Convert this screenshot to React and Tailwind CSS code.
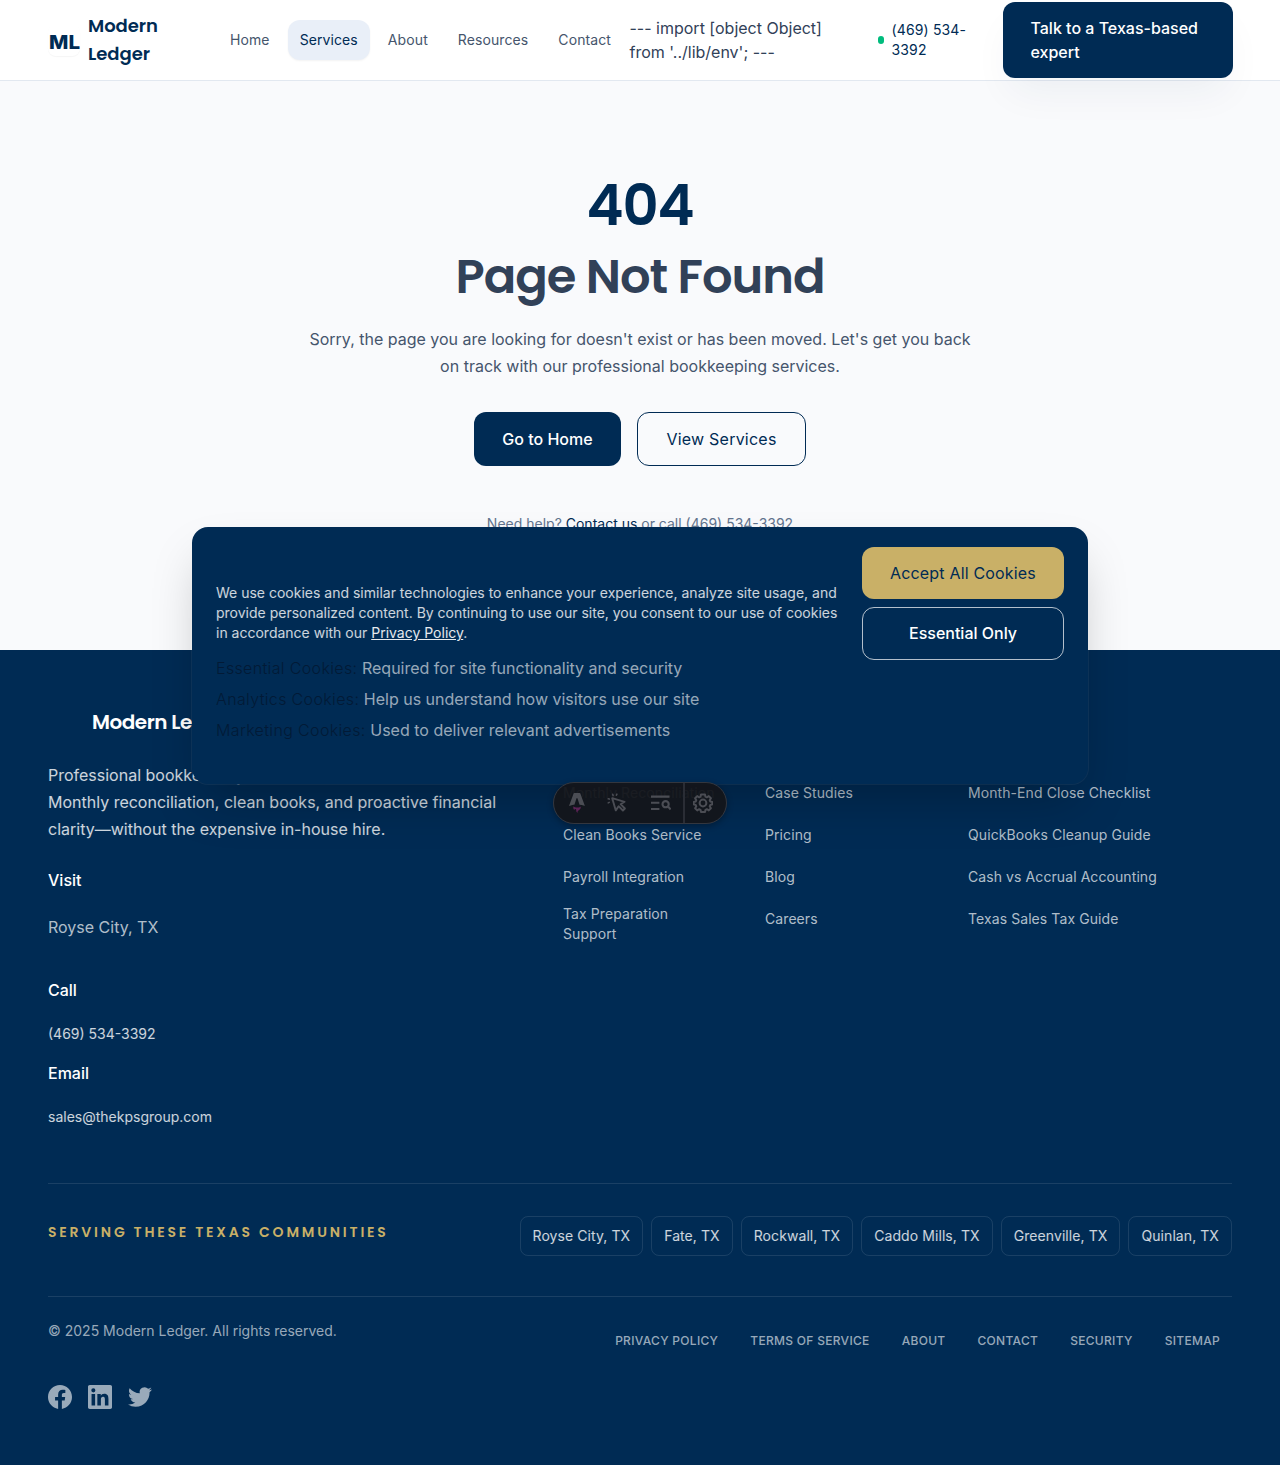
import React from "react";

const display = "font-['Poppins','Inter',sans-serif]";

function Header() {
  return (
    <header className="flex h-[81px] items-center border-b border-slate-200 bg-white px-12">
      <a className="flex w-[170px] shrink-0 items-center gap-2">
        <span className="flex size-8 items-center justify-center rounded-lg bg-white shadow-[0_1px_1px_rgba(0,0,0,0.04)]">
          <svg width="32" height="32" viewBox="0 0 32 32">
            <text x="1" y="24.5" fontSize="19" fontWeight="800" fill="#002b54" fontFamily="Inter, sans-serif" textLength="31" lengthAdjust="spacingAndGlyphs">ML</text>
          </svg>
        </span>
        <span className={`${display} w-20 text-[18px] leading-7 font-semibold tracking-[-0.002em] text-[#002b54]`}>Modern Ledger</span>
      </a>
      <nav className="flex w-[405.5px] shrink-0 items-center gap-[6px] text-sm leading-5 tracking-[0.007em] text-slate-600">
        <a className="px-3 py-[10px]">Home</a>
        <a className="rounded-xl bg-[#e9eff8] px-3 py-[10px] text-[#002b54] shadow-xs">Services</a>
        <a className="px-3 py-[10px]">About</a>
        <a className="px-3 py-[10px]">Resources</a>
        <a className="px-3 py-[10px]">Contact</a>
      </nav>
      <p className="ml-[6px] w-[248px] shrink-0 pr-8 leading-6 text-slate-700">--- import [object Object] from '../lib/env'; ---</p>
      <div className="flex w-[125px] shrink-0 items-center gap-2">
        <span className="h-2 w-[6px] shrink-0 rounded-full bg-emerald-500" />
        <span className="w-[85px] text-sm leading-5 tracking-[0.01em] text-[#002b54]">(469) 534-3392</span>
      </div>
      <button className="relative w-[230px] shrink-0 rounded-xl bg-[#002b54] px-7 py-[14px] text-left leading-6 font-medium text-white shadow-[0_20px_40px_-8px_rgba(0,43,84,0.06)]">Talk to a Texas-based expert</button>
    </header>
  );
}

function Hero() {
  return (
    <main className="flex h-[569px] flex-col items-center bg-[#f9fafc] pt-[90px] text-center">
      <h1 className={`${display} text-[56px] leading-[70px] font-semibold tracking-[-0.02em] text-[#002b54]`}>404</h1>
      <h2 className={`${display} mt-[1px] text-[48px] leading-[70px] font-semibold tracking-[-0.0215em] text-slate-700`}>Page Not Found</h2>
      <p className="mt-[14px] w-[672px] leading-[27px] text-slate-600">
        Sorry, the page you are looking for doesn't exist or has been moved. Let's get you back on track with our professional bookkeeping services.
      </p>
      <div className="mt-8 flex gap-4">
        <a className="flex h-[54px] w-[147px] items-center justify-center rounded-xl bg-[#002b54] font-medium text-white">Go to Home</a>
        <a className="flex h-[54px] w-[169px] items-center justify-center rounded-xl border-[1.5px] border-[#002b54] tracking-[0.014em] text-[#002b54]">View Services</a>
      </div>
      <p className="mt-12 text-sm leading-5 text-slate-500">
        Need help? <a className="text-[#002b54]">Contact us</a> or call (469) 534-3392
      </p>
    </main>
  );
}

function LinkColumn({ links, className }) {
  return (
    <ul className={`flex flex-col gap-3 text-sm leading-5 tracking-[0.006em] text-white/70 ${className}`}>
      {links.map((l) => (
        <li key={l} className="flex min-h-[30px] items-center">{l}</li>
      ))}
    </ul>
  );
}

const cities = ["Royse City, TX", "Fate, TX", "Rockwall, TX", "Caddo Mills, TX", "Greenville, TX", "Quinlan, TX"];
const legal = ["Privacy Policy", "Terms of Service", "About", "Contact", "Security", "Sitemap"];
const socials = [
  "M24 12.073c0-6.627-5.373-12-12-12s-12 5.373-12 12c0 5.99 4.388 10.954 10.125 11.854v-8.385H7.078v-3.47h3.047V9.43c0-3.007 1.792-4.669 4.533-4.669 1.312 0 2.686.235 2.686.235v2.953H15.83c-1.491 0-1.956.925-1.956 1.874v2.25h3.328l-.532 3.47h-2.796v8.385C19.612 23.027 24 18.062 24 12.073z",
  "M20.447 20.452h-3.554v-5.569c0-1.328-.027-3.037-1.852-3.037-1.853 0-2.136 1.445-2.136 2.939v5.667H9.351V9h3.414v1.561h.046c.477-.9 1.637-1.85 3.37-1.85 3.601 0 4.267 2.37 4.267 5.455v6.286zM5.337 7.433a2.062 2.062 0 0 1-2.063-2.065 2.064 2.064 0 1 1 2.063 2.065zm1.782 13.019H3.555V9h3.564v11.452zM22.225 0H1.771C.792 0 0 .774 0 1.729v20.542C0 23.227.792 24 1.771 24h20.451C23.2 24 24 23.227 24 22.271V1.729C24 .774 23.2 0 22.222 0h.003z",
  "M23.953 4.57a10 10 0 01-2.825.775 4.958 4.958 0 002.163-2.723c-.951.555-2.005.959-3.127 1.184a4.92 4.92 0 00-8.384 4.482C7.69 8.095 4.067 6.13 1.64 3.162a4.822 4.822 0 00-.666 2.475c0 1.71.87 3.213 2.188 4.096a4.904 4.904 0 01-2.228-.616v.06a4.923 4.923 0 003.946 4.827 4.996 4.996 0 01-2.212.085 4.936 4.936 0 004.604 3.417 9.867 9.867 0 01-6.102 2.105c-.39 0-.779-.023-1.17-.067a13.995 13.995 0 007.557 2.209c9.053 0 13.998-7.496 13.998-13.985 0-.21 0-.42-.015-.63A9.935 9.935 0 0024 4.59z",
];

function Footer() {
  return (
    <footer className="h-[815px] bg-[#002b54] px-12 text-white">
      <div className="flex h-[533px] pt-[58px]">
        <div className="w-[515px]">
          <p className={`${display} pl-11 text-[20px] leading-7 font-semibold tracking-[-0.025em]`}>Modern Ledger</p>
          <p className="mt-[26px] w-[460px] leading-[27px] text-white/80">
            Professional bookkeeping for Texas businesses.
            <br />
            Monthly reconciliation, clean books, and proactive financial clarity—without the expensive in-house hire.
          </p>
          <p className="mt-6 leading-[27px] font-medium">Visit</p>
          <p className="mt-5 leading-[27px] text-white/70">Royse City, TX</p>
          <p className="mt-9 leading-[27px] font-medium">Call</p>
          <p className="mt-5 text-sm leading-5 text-white/80">(469) 534-3392</p>
          <p className="mt-4 leading-[27px] font-medium">Email</p>
          <p className="mt-5 text-sm leading-5 text-white/80">sales@thekpsgroup.com</p>
        </div>
        <div className="flex pt-[70px]">
          <LinkColumn className="w-[202px] pr-[42px]" links={["Monthly Reconciliation", "Clean Books Service", "Payroll Integration", "Tax Preparation Support"]} />
          <LinkColumn className="w-[203px]" links={["Case Studies", "Pricing", "Blog", "Careers"]} />
          <LinkColumn className="w-[260px]" links={["Month-End Close Checklist", "QuickBooks Cleanup Guide", "Cash vs Accrual Accounting", "Texas Sales Tax Guide"]} />
        </div>
      </div>
      <div className="flex h-[113px] justify-between border-t border-white/10 pt-8">
        <h3 className={`${display} pt-[6px] text-sm leading-5 font-semibold tracking-[0.2em] text-[#c9b067]`}>SERVING THESE TEXAS COMMUNITIES</h3>
        <ul className="flex h-10 gap-2 text-sm tracking-[0.0055em] text-white/80">
          {cities.map((c) => (
            <li key={c} className="flex items-center rounded-lg border border-white/10 px-3">{c}</li>
          ))}
        </ul>
      </div>
      <div className="flex justify-between border-t border-white/10 pt-6">
        <p className="text-sm leading-5 text-white/60">© 2025 Modern Ledger. All rights reserved.</p>
        <ul className="mr-3 flex gap-8 pt-[10px] text-xs leading-5 font-medium tracking-[0.025em] text-white/60 uppercase">
          {legal.map((l) => (
            <li key={l}>{l}</li>
          ))}
        </ul>
      </div>
      <div className="mt-[34px] flex gap-4 text-white/60">
        {socials.map((d) => (
          <svg key={d} className="size-6" viewBox="0 0 24 24" fill="currentColor"><path d={d} /></svg>
        ))}
      </div>
    </footer>
  );
}

const cookieKinds = [
  ["Essential Cookies:", "Required for site functionality and security"],
  ["Analytics Cookies:", "Help us understand how visitors use our site"],
  ["Marketing Cookies:", "Used to deliver relevant advertisements"],
];

function CookieBanner() {
  return (
    <section className="absolute top-[527px] left-[192px] flex h-[257px] w-[896px] rounded-2xl bg-[#002b54] px-6 pt-5 shadow-[0_0_0_1px_rgba(255,255,255,0.05),0_25px_50px_-12px_rgba(0,0,0,0.25)]">
      <div className="w-[646px] pt-9">
        <p className="w-[630px] text-sm leading-5 text-white/80">
          We use cookies and similar technologies to enhance your experience, analyze site usage, and provide personalized content. By continuing to use our site, you consent to our use of cookies in accordance with our <a className="text-white/90 underline">Privacy Policy</a>.
        </p>
        <ul className="mt-3 flex flex-col gap-1 leading-[27px]">
          {cookieKinds.map(([k, v]) => (
            <li key={k} className="whitespace-nowrap text-white/60">
              <span className="tracking-[0.022em] font-light text-[#021a36]">{k}</span> {v}
            </li>
          ))}
        </ul>
      </div>
      <div className="flex w-[202px] flex-col gap-2">
        <button className="h-[51.5px] rounded-xl bg-[#c9b067] tracking-[0.011em] text-[#002b54]">Accept All Cookies</button>
        <button className="h-[53.5px] rounded-xl border-[1.5px] border-white/70 font-medium text-white">Essential Only</button>
      </div>
    </section>
  );
}

function DevToolbar() {
  return (
    <div className="absolute top-[782px] left-[553px] flex h-[42px] w-[174px] items-center rounded-full border border-[#33363e] bg-[#13151a]/95 text-[#4b4d54] shadow-[0_2px_6px_rgba(0,0,0,0.3)]">
      <span className="flex w-[45px] justify-center">
        <svg width="16" height="20" viewBox="0 0 85 107" fill="none">
          <path fill="#5c2356" d="M27.589 91.136c-4.834-4.418-6.245-13.702-4.231-20.429 3.492 4.241 8.331 5.584 13.342 6.343 7.738 1.17 15.336.732 22.523-2.804.822-.405 1.582-.943 2.48-1.489.675 1.957.85 3.932.615 5.943-.573 4.896-3.01 8.678-6.885 11.545-1.55 1.147-3.19 2.172-4.79 3.253-4.917 3.323-6.247 7.22-4.4 12.888l.183.614c-2.51-1.124-4.345-2.76-5.742-4.911-1.476-2.27-2.178-4.781-2.215-7.498-.018-1.322-.018-2.657-.196-3.96-.434-3.178-1.926-4.601-4.737-4.683-2.884-.084-5.166 1.699-5.771 4.508z" />
          <path fill="currentColor" d="M0 69.587s14.314-6.973 28.668-6.973L39.49 29.12c.405-1.62 1.588-2.72 2.924-2.72s2.518 1.1 2.924 2.72L56.16 62.614c17 0 28.668 6.973 28.668 6.973S60.514 3.352 60.467 3.219C59.769 1.261 58.591 0 57.003 0H27.827c-1.588 0-2.718 1.261-3.464 3.219C24.311 3.35 0 69.587 0 69.587Z" />
        </svg>
      </span>
      <span className="flex w-[36px] justify-center">
        <svg width="20" height="20" viewBox="0 0 20 20" fill="none" stroke="currentColor" strokeWidth="1.9" strokeLinejoin="round" strokeLinecap="round">
          <path d="M5.2 5.2l3.6 12.2 2.8-4.2 4.3 4.3 2-2-4.3-4.3 4-2.4z" />
          <path strokeWidth="1.6" d="M6.1 2.4l-.4-1.2M9.4 2.2l.5-1M2.4 6.1l-1.2-.4M2.2 9.4l-1 .5" />
        </svg>
      </span>
      <span className="flex w-[48px] justify-center pl-1">
        <svg width="20" height="16" viewBox="0 0 20 16" fill="none" stroke="currentColor" strokeWidth="2.1">
          <path d="M0 1.6h18.5M0 7.8h8.4M0 14h8.4" />
          <circle cx="14.6" cy="9.2" r="3.1" />
          <path d="M17 11.6l2.7 2.8" />
        </svg>
      </span>
      <span className="flex h-full flex-1 items-center justify-center border-l-2 border-[#2a2d35] pr-[5px] pb-[1px]">
        <svg width="20" height="20" viewBox="0 0 20 20" fill="none" stroke="currentColor" strokeWidth="2" strokeLinejoin="round">
          <path d="M8 1.5h4l.5 2.2 1.3.6 2-1.2 2.1 2.1-1.2 2 .6 1.3 2 .5v2.4l-2 .6-.6 1.3 1.2 2-2.1 2.1-2-1.2-1.3.6-.5 2.2H8l-.5-2.2-1.3-.6-2 1.2-2.1-2.1 1.2-2-.6-1.3-2-.6V9l2-.5.6-1.3-1.2-2 2.1-2.1 2 1.2 1.3-.6z" />
          <circle cx="10" cy="10" r="3.4" />
        </svg>
      </span>
    </div>
  );
}

export default function App() {
  return (
    <div className="relative h-[1465px] w-[1280px] overflow-hidden bg-[#f9fafc] font-['Inter',sans-serif] text-base">
      <Header />
      <Hero />
      <Footer />
      <CookieBanner />
      <DevToolbar />
    </div>
  );
}
